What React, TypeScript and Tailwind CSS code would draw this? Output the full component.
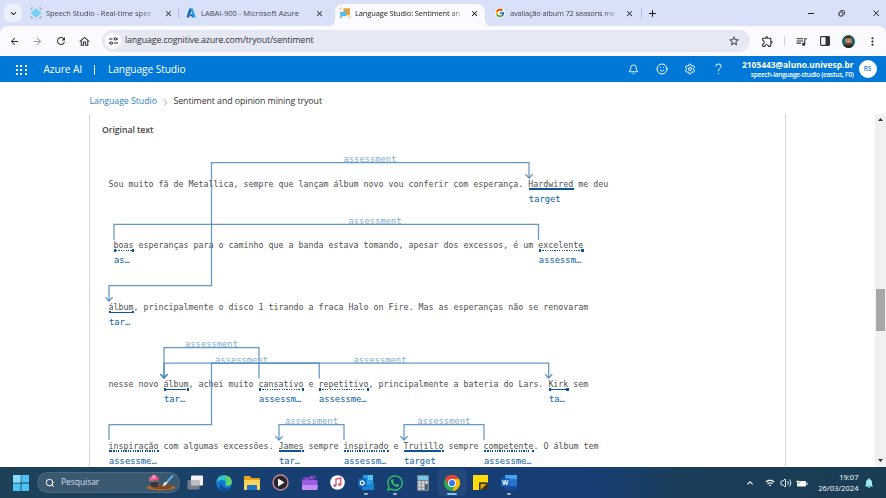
import React from "react";
import {
  MdArrowBack,
  MdArrowForward,
  MdRefresh,
  MdOutlineHome,
  MdStarBorder,
  MdOutlineExtension,
  MdQueueMusic,
  MdMoreVert,
  MdClose,
  MdAdd,
  MdKeyboardArrowDown,
  MdKeyboardArrowUp,
  MdNotifications,
  MdWifi,
} from "react-icons/md";
import { FcGoogle } from "react-icons/fc";
import { FaWhatsapp } from "react-icons/fa";
import { Bell, Smile, Settings, Search, Volume2, ChevronRight } from "lucide-react";

type Kind = "target" | "assessment";
type Piece = string | { word: string; kind: Kind; label: string };

const lines: { top: string; pieces: Piece[] }[] = [
  {
    top: "mt-[41px]",
    pieces: [
      "Sou muito fã de Metallica, sempre que lançam álbum novo vou conferir com esperança. ",
      { word: "Hardwired", kind: "target", label: "target" },
      " me deu",
    ],
  },
  {
    top: "mt-[49.4px]",
    pieces: [
      " ",
      { word: "boas", kind: "assessment", label: "as…" },
      " esperanças para o caminho que a banda estava tomando, apesar dos excessos, é um ",
      { word: "excelente", kind: "assessment", label: "assessm…" },
    ],
  },
  {
    top: "mt-[49.9px]",
    pieces: [
      { word: "álbum", kind: "target", label: "tar…" },
      ", principalmente o disco 1 tirando a fraca Halo on Fire. Mas as esperanças não se renovaram",
    ],
  },
  {
    top: "mt-[65.2px]",
    pieces: [
      "nesse novo ",
      { word: "álbum", kind: "target", label: "tar…" },
      ", achei muito ",
      { word: "cansativo", kind: "assessment", label: "assessm…" },
      " e ",
      { word: "repetitivo", kind: "assessment", label: "assessme…" },
      ", principalmente a bateria do Lars. ",
      { word: "Kirk", kind: "target", label: "ta…" },
      " sem",
    ],
  },
  {
    top: "mt-[49.5px]",
    pieces: [
      { word: "inspiração", kind: "assessment", label: "assessme…" },
      " com algumas excessões. ",
      { word: "James", kind: "target", label: "tar…" },
      " sempre ",
      { word: "inspirado", kind: "assessment", label: "assessm…" },
      " e ",
      { word: "Trujillo", kind: "target", label: "target" },
      " sempre ",
      { word: "competente", kind: "assessment", label: "assessme…" },
      ". O álbum tem",
    ],
  },
];

function Entity({ word, kind, label }: { word: string; kind: Kind; label: string }) {
  return (
    <span className="relative inline-block">
      {word}
      <span
        className={`absolute left-[2px] right-[2px] top-[10.3px] h-[1.6px] ${
          kind === "target"
            ? "bg-[#0b559f]"
            : "bg-[repeating-linear-gradient(90deg,#0b559f_0px,#0b559f_1.2px,transparent_1.2px,transparent_2.4px)]"
        }`}
      />
      <span className="absolute left-[0.5px] top-[9.8px] h-[2.4px] w-[2.4px] bg-[#0b559f]" />
      <span className="absolute -right-[0.5px] top-[9.8px] h-[2.4px] w-[2.4px] bg-[#0b559f]" />
      <span className="absolute left-[0.5px] top-[15px] text-[8.75px] font-normal tracking-[0.03px] text-[#2068aa] [-webkit-text-stroke:0.08px_#2068aa]">
        {label}
      </span>
    </span>
  );
}

const paths = [
  "M529 178V162.7H211.5V285.5H109V301",
  "M114 240V224.3H538.5V240",
  "M164 378V347.5H259V378.5",
  "M164 378V363H319.3V378.5",
  "M548.7 378V363H211.5V424.7H109V440",
  "M279 440V424.7H344V440",
  "M404 440V424.7H484V440",
];
const arrows = [
  [529, 178],
  [109, 301],
  [164, 378],
  [164, 378],
  [548.7, 378],
  [279, 440],
  [404, 440],
];
const relations = [
  [343.5, 162.4],
  [348.5, 224],
  [185, 347],
  [215, 362.7],
  [353.5, 362.7],
  [285, 424.4],
  [417.3, 424.4],
];

function Connectors() {
  return (
    <svg className="pointer-events-none absolute left-0 top-0" width="886" height="385" viewBox="0 82 886 385">
      <g fill="none" stroke="#3c80ba" strokeOpacity="0.8" strokeWidth="1.25">
        {paths.map((d) => (
          <path key={d} d={d} />
        ))}
        {arrows.map(([x, y], i) => (
          <path key={i} d={`M${x - 3.6} ${y - 3.8}L${x} ${y}L${x + 3.6} ${y - 3.8}`} />
        ))}
      </g>
      <g fill="#84adcf" className="font-['DejaVu_Sans_Mono',monospace] text-[8.8px]">
        {relations.map(([x, y], i) => (
          <text key={i} x={x} y={y}>
            assessment
          </text>
        ))}
      </g>
    </svg>
  );
}

function SpeechIcon() {
  return (
    <svg width="12" height="12" viewBox="0 0 12 12">
      <path d="M6 1L11 6L6 11L1 6Z" fill="#7fd3f5" />
      <path d="M2 4.5V7.5M4 3V9M6 2V10M8 3V9M10 4.5V7.5" stroke="#70cdf2" />
      <path d="M1 3V1H3M9 1H11V3M11 9V11H9M3 11H1V9" fill="none" stroke="#8f93b5" strokeWidth="0.8" />
    </svg>
  );
}

function AzureIcon() {
  return (
    <svg width="10" height="10" viewBox="0 0 10 10">
      <path d="M3.3 0.5H6L3 9.5H0.5Z" fill="#1267b4" />
      <path d="M5 0.5H6.8L9.8 9.5H7L3.4 6.6H6.2L4.6 2Z" fill="#2f9fe8" />
      <path d="M3.2 6.5H6.4L7 9.4Z" fill="#0a539c" />
    </svg>
  );
}

function LanguageIcon() {
  return (
    <svg width="12" height="12" viewBox="0 0 12 12">
      <path d="M1 3V1H3M1 9V11H3M11 9V11H9" fill="none" stroke="#d9b45e" strokeWidth="0.7" />
      <rect x="4.5" y="1.2" width="6.5" height="7" fill="#f5a335" />
      <path d="M6 3.2H9.5M6 4.8H8.5" stroke="#4dbceb" strokeWidth="0.8" />
      <path d="M1 5H7V9.3H3.5L1.5 10.8Z" fill="#4dbceb" />
    </svg>
  );
}

function TabTitle({ children, className }: { children: string; className: string }) {
  return (
    <span
      className={`shrink-0 whitespace-nowrap text-[7.5px] leading-3 ${className}`}
    >
      {children}
    </span>
  );
}

function TabStrip() {
  return (
    <div className="flex h-[26px] items-center bg-[#d9e1f9] text-[#45484f]">
      <div className="ml-1 flex h-[18px] w-[18px] shrink-0 items-center justify-center rounded-md bg-[#edf1fc]">
        <MdKeyboardArrowDown size={11} className="text-black" />
      </div>
      <div className="ml-2 flex w-[148px] shrink-0 items-center">
        <SpeechIcon />
        <TabTitle className="ml-1 w-[110px] tracking-[-0.07px] [mask-image:linear-gradient(to_right,black_85%,transparent)]">
          Speech Studio - Real-time spee
        </TabTitle>
        <MdClose size={9} className="ml-[8px] text-[#222]" />
      </div>
      <div className="flex h-[26px] w-[157px] shrink-0 items-center">
        <div className="h-[10px] w-px bg-[#a9c3f5]" />
        <span className="ml-[7px]">
          <AzureIcon />
        </span>
        <TabTitle className="ml-[5px] w-[110px] tracking-[0.03px]">LABAI-900 - Microsoft Azure</TabTitle>
        <MdClose size={9} className="ml-[4px] text-[#222]" />
      </div>
      <div className="relative mt-1 flex h-[22px] w-[150px] shrink-0 items-center rounded-t-lg bg-[#fbfbff] pb-[4px] pl-1 text-[#222]">
        <span className="absolute -left-[6px] bottom-0 h-[6px] w-[6px] bg-[radial-gradient(circle_at_0_0,transparent_6px,#fbfbff_6px)]" />
        <span className="absolute -right-[6px] bottom-0 h-[6px] w-[6px] bg-[radial-gradient(circle_at_100%_0,transparent_6px,#fbfbff_6px)]" />
        <LanguageIcon />
        <TabTitle className="ml-[4px] w-[111px] tracking-[-0.13px] [mask-image:linear-gradient(to_right,black_85%,transparent)]">
          Language Studio: Sentiment an
        </TabTitle>
        <MdClose size={9} className="ml-[4px] text-black" />
      </div>
      <div className="flex h-[26px] w-[157px] shrink-0 items-center pl-[10px]">
        <span className="flex h-[10px] w-[10px] items-center justify-center rounded-full bg-white">
          <FcGoogle size={10} />
        </span>
        <TabTitle className="ml-[5px] w-[110px] tracking-[-0.18px] [mask-image:linear-gradient(to_right,black_85%,transparent)]">
          avaliação album 72 seasons me
        </TabTitle>
        <MdClose size={9} className="ml-[5px] text-[#222]" />
      </div>
      <div className="-ml-px h-[10px] w-px shrink-0 bg-[#a9c3f5]" />
      <MdAdd size={11} className="ml-[5px] shrink-0 text-black" />
      <svg className="ml-[149px] shrink-0" width="72" height="12" viewBox="0 0 72 12" fill="none" stroke="#222">
        <path d="M1 6.5H7M66.5 3.5L72 9M72 3.5L66.5 9" />
        <rect x="32" y="5" width="4" height="4" rx="1" />
        <path d="M33.5 3.5H36.5Q37.5 3.5 37.5 4.5V7.5" strokeWidth="0.8" />
      </svg>
    </div>
  );
}

function Toolbar() {
  return (
    <div className="bg-[#d9e1f9]">
      <div className="flex h-[30px] items-center rounded-t-lg bg-[#fbfbff] text-[#303238]">
        <MdArrowBack size={11} className="ml-[9px] shrink-0" />
        <MdArrowForward size={11} className="ml-[12px] shrink-0 text-[#9a9ba2]" />
        <MdRefresh size={12} className="ml-[12px] shrink-0" />
        <MdOutlineHome size={13} className="ml-[11px] shrink-0" />
        <div className="ml-[11px] flex h-[22px] w-[648px] shrink-0 items-center rounded-full bg-[#e6e8f3] pl-[3px]">
          <div className="flex h-4 w-4 items-center justify-center rounded-full bg-white">
            <svg width="9" height="8" viewBox="0 0 9 8" fill="none" stroke="#222">
              <path d="M0 2H3.4M5 6H9" />
              <rect x="5" y="0.8" width="2.6" height="2.2" rx="1" />
              <rect x="1" y="5" width="2.6" height="2.2" rx="1" />
              <path d="M7.5 2H9M0 6H1" />
            </svg>
          </div>
          <span className="ml-[4px] w-[600px] text-[8.8px] tracking-[-0.13px]">language.cognitive.azure.com/tryout/sentiment</span>
          <MdStarBorder size={12} className="ml-[3px] shrink-0" />
        </div>
        <MdOutlineExtension size={13} className="ml-[11px] shrink-0" />
        <div className="ml-[10px] h-[10px] w-px shrink-0 bg-[#c5d4f5]" />
        <MdQueueMusic size={13} className="ml-[10px] shrink-0" />
        <svg className="ml-[12px] shrink-0" width="10" height="10" viewBox="0 0 10 10">
          <rect x="0.6" y="0.6" width="8.8" height="8.8" rx="0.8" fill="none" stroke="#303238" strokeWidth="1.1" />
          <rect x="5.5" y="0.6" width="4" height="8.8" fill="#303238" />
        </svg>
        <svg className="ml-[12px] shrink-0" width="13" height="13" viewBox="0 0 13 13">
          <circle cx="6.5" cy="6.5" r="6.5" fill="#1c6064" />
          <path d="M1.5 10.5Q6.5 7.5 11.5 10.5Q9 13 6.5 13Q4 13 1.5 10.5Z" fill="#22241f" />
          <ellipse cx="6.5" cy="5.8" rx="3.2" ry="4.2" fill="#d6976f" />
          <path d="M3.3 4.3Q3.5 1.2 6.5 1.2Q9.5 1.2 9.7 4.3L9 3.2H4Z" fill="#2a1b16" />
          <path d="M3.6 7L5 7.7H8L9.4 7Q9 10.7 6.5 10.7Q4 10.7 3.6 7Z" fill="#6b3d26" />
          <path d="M4.4 5H5.8M7.2 5H8.6" stroke="#4c2d20" strokeWidth="0.7" />
        </svg>
        <MdMoreVert size={13} className="ml-[11px] shrink-0" />
      </div>
    </div>
  );
}

function AppHeader() {
  return (
    <div className="flex h-[26px] items-center bg-[#0078d7] text-white">
      <div className="ml-4 mt-px grid w-[11px] shrink-0 grid-cols-3 gap-[2px]">
        {Array.from({ length: 9 }, (_, i) => (
          <span key={i} className="h-[2px] w-[2px] bg-white" />
        ))}
      </div>
      <span className="ml-[16.5px] mt-px w-[50.5px] shrink-0 whitespace-nowrap text-[10.2px] tracking-[-0.1px]">Azure AI</span>
      <span className="mt-px h-[10px] w-px shrink-0 bg-white" />
      <span className="ml-[13px] mt-px w-[500px] shrink-0 whitespace-nowrap text-[10.2px] tracking-[-0.1px]">Language Studio</span>
      <Bell size={11} strokeWidth={2} className="ml-[19.5px] shrink-0" />
      <Smile size={12} strokeWidth={2} className="ml-[17px] shrink-0" />
      <Settings size={12} strokeWidth={2} className="ml-[16.5px] shrink-0" />
      <svg className="ml-[18px] shrink-0" width="9" height="12" viewBox="0 0 9 12" fill="none" stroke="white">
        <path d="M1.8 3.3Q1.8 1 4.5 1Q7.2 1 7.2 3.2Q7.2 4.5 5.8 5.5Q4.5 6.5 4.5 8.2" />
        <circle cx="4.5" cy="10.6" r="0.4" fill="white" strokeWidth="0.5" />
      </svg>
      <div className="ml-[8.5px] mt-px flex w-[122px] shrink-0 flex-col items-end whitespace-nowrap">
        <span className="text-[8.4px] font-bold leading-[11px]">2105443@aluno.univesp.br</span>
        <span className="text-[6.5px] font-semibold leading-[10px] tracking-[-0.25px]">speech-language-studio (eastus, F0)</span>
      </div>
      <div className="ml-[5px] flex h-[18px] w-[18px] shrink-0 items-center justify-center rounded-full bg-white text-[6.5px] font-semibold text-[#2480c9]">
        RS
      </div>
    </div>
  );
}

function Content() {
  return (
    <div className="relative flex h-[385px] flex-col overflow-hidden bg-white">
      <div className="flex h-[32px] shrink-0 items-center pl-[89.5px] pt-[8px] text-[8.8px]">
        <span className="w-[68px] whitespace-nowrap tracking-[-0.05px] text-[#2c83cc]">Language Studio</span>
        <ChevronRight size={11} strokeWidth={1.5} className="ml-[2px] text-[#888]" />
        <span className="ml-[3px] whitespace-nowrap tracking-[-0.08px] text-[#333]">Sentiment and opinion mining tryout</span>
      </div>
      <div className="flex min-h-0 flex-1">
        <div className="ml-[89px] w-[697px] shrink-0 overflow-hidden border-x border-[#d6d6d6]">
          <h2 className="ml-3 mt-[9px] text-[8.7px] font-semibold leading-[14px] tracking-[-0.06px] text-[#444]">Original text</h2>
          <div className="ml-[18.5px] font-['DejaVu_Sans_Mono',monospace] text-[8.3px] leading-3 tracking-[0.003px] text-[#4f4f4f]">
            {lines.map((line, i) => (
              <div key={i} className={`h-3 whitespace-pre ${line.top}`}>
                {line.pieces.map((p, j) =>
                  typeof p === "string" ? <span key={j}>{p}</span> : <Entity key={j} {...p} />
                )}
              </div>
            ))}
          </div>
        </div>
        <div className="ml-auto flex w-[11px] flex-col items-center bg-[#f1f1f1]">
          <svg className="mt-1 shrink-0" width="5" height="3" viewBox="0 0 5 3">
            <path d="M2.5 0L5 3H0Z" fill="#333" />
          </svg>
          <div className="mt-[168px] h-[42px] w-[9px] shrink-0 bg-[#a8a8a8]" />
          <svg className="mb-[5px] mt-auto shrink-0" width="5" height="3" viewBox="0 0 5 3">
            <path d="M0 0H5L2.5 3Z" fill="#333" />
          </svg>
        </div>
      </div>
      <Connectors />
    </div>
  );
}

function Slot({ children, mark }: { children: React.ReactNode; mark?: "open" | "active" }) {
  return (
    <div
      className={`relative flex h-[27px] w-[28.5px] shrink-0 items-center justify-center ${
        mark === "active" ? "rounded bg-white/5" : ""
      }`}
    >
      {children}
      {mark && (
        <span
          className={`absolute bottom-[1px] h-[2px] rounded-full ${mark === "active" ? "w-[10px] bg-[#7cc8ee]" : "w-1 bg-[#9eb3c6]"}`}
        />
      )}
    </div>
  );
}

function Taskbar() {
  return (
    <div className="flex h-[31px] items-center bg-[linear-gradient(90deg,#1c4158_0%,#1c4260_15%,#173f72_30%,#173e75_66%,#1a3e59_77%,#193d54_100%)] text-white">
      <svg className="ml-[13px] shrink-0" width="16" height="16" viewBox="0 0 16 16">
        <path d="M0 0H7.6V7.6H0ZM8.4 0H16V7.6H8.4ZM0 8.4H7.6V16H0ZM8.4 8.4H16V16H8.4Z" fill="#4cc2f5" />
        <path d="M0 0H7.6V7.6H0Z" fill="#8bdcfa" />
      </svg>
      <div className="ml-2 flex h-[21px] w-[143px] shrink-0 items-center rounded-full border border-white/10 bg-[#3a5870] pl-[7px]">
        <Search size={10} strokeWidth={2.4} />
        <span className="ml-[6px] w-[85px] text-[8.6px] tracking-[-0.1px] text-[#d3dce3]">Pesquisar</span>
        <svg className="shrink-0" width="30" height="17" viewBox="0 0 30 17">
          <ellipse cx="15" cy="13.5" rx="14.5" ry="3" fill="#a3682f" />
          <path d="M9 12Q17 9 27 12L22 15H9Z" fill="#7d4721" />
          <circle cx="6" cy="5.2" r="2.8" fill="#ef5f96" />
          <circle cx="10" cy="5" r="2.8" fill="#e94885" />
          <circle cx="8" cy="3" r="2.3" fill="#ff88b2" />
          <path d="M3 8Q8 5.5 13 8" stroke="#38843f" strokeWidth="1.2" fill="none" />
          <path d="M5 8H11.5L12 12Q8.5 15 4.5 12Z" fill="#3c3346" />
          <path d="M27 1.5L21.5 7.5" stroke="#58aee8" strokeWidth="2" />
          <path d="M22.5 7L20 11L16.5 12.5L18 8.5Z" fill="#dce8ef" />
        </svg>
      </div>
      <div className="flex pl-[1px]">
        <Slot>
          <svg width="16" height="15" viewBox="0 0 16 15">
            <rect x="4" y="0.5" width="12" height="10" rx="1" fill="#f3f3f3" />
            <rect x="0.5" y="5" width="12" height="9.5" rx="1" fill="#7f858e" fillOpacity="0.9" />
            <rect x="4" y="5" width="8.5" height="5.5" fill="#bbbfc5" />
          </svg>
        </Slot>
        <Slot>
          <svg width="16" height="16" viewBox="0 0 16 16">
            <circle cx="8" cy="8" r="7.8" fill="#1278cf" />
            <path d="M0.3 7.5Q1 0.3 8 0.2Q15.8 0.8 15.8 7.2Q15.2 10.7 11.5 10.7Q8.5 10.7 9.8 8.4Q10 5 6 5Q2 5 0.3 7.5Z" fill="#35c3c8" />
            <path d="M8 0.2Q15.8 0.8 15.8 7.2Q15.2 10.7 11.5 10.7Q9 10.7 9.8 8.4Q13.5 6 8 0.2Z" fill="#66d35b" />
            <path d="M5.6 8.5Q5.5 14 12.8 13.2Q9 17 4.8 14.9Q2.4 11 5.6 8.5Z" fill="#0c4b9c" />
          </svg>
        </Slot>
        <Slot>
          <svg width="16" height="14" viewBox="0 0 16 14">
            <path d="M0 1Q0 0 1 0H6L7.5 2H15Q16 2 16 3V13Q16 14 15 14H1Q0 14 0 13Z" fill="#e6a420" />
            <path d="M0 4H16V13Q16 14 15 14H1Q0 14 0 13Z" fill="#ffd45c" />
            <path d="M3 14V10Q3 9 4 9H12Q13 9 13 10V14Z" fill="#1875ca" />
          </svg>
        </Slot>
        <Slot>
          <svg width="17" height="17" viewBox="0 0 17 17">
            <circle cx="8.5" cy="8.5" r="7.5" fill="#27252d" stroke="#c48b96" strokeWidth="1.4" />
            <path d="M6 4.5L12.5 8.5L6 12.5Z" fill="white" />
          </svg>
        </Slot>
        <Slot>
          <svg width="17" height="15" viewBox="0 0 17 15">
            <path d="M0.5 3.5L14.5 0L15.5 3.5L1 6.5Z" fill="#6e3bb5" />
            <path d="M4 2.6L7 5.2M9 1.4L12 4.2" stroke="#8d56cf" strokeWidth="1.7" />
            <rect x="1" y="5" width="15.5" height="10" rx="1.2" fill="#9b5be2" />
            <path d="M1 10H16.5V14Q16.5 15 15.5 15H2Q1 15 1 14Z" fill="#c58cf5" />
          </svg>
        </Slot>
        <Slot>
          <svg width="15" height="15" viewBox="0 0 15 15">
            <circle cx="7.5" cy="7.5" r="7.3" fill="white" />
            <path d="M6 10.5V4L10.8 3V9.5" fill="none" stroke="#ec4a68" strokeWidth="1.3" />
            <ellipse cx="4.9" cy="10.6" rx="1.6" ry="1.3" fill="#a958c8" />
            <ellipse cx="9.7" cy="9.6" rx="1.6" ry="1.3" fill="#ec4a68" />
          </svg>
        </Slot>
        <Slot mark="open">
          <svg width="16" height="15" viewBox="0 0 16 15">
            <rect x="5" y="0" width="10" height="10" fill="#2d9be3" />
            <path d="M10 0H15V5H10Z" fill="#55c4f5" />
            <path d="M4 7L10 10.5L16 7V14Q16 15 15 15H5Q4 15 4 14Z" fill="#1a85d6" />
            <rect x="0" y="3.5" width="8.5" height="8.5" rx="0.8" fill="#0b65b9" />
            <circle cx="4.2" cy="7.8" r="2" fill="none" stroke="white" strokeWidth="1.2" />
          </svg>
        </Slot>
        <Slot mark="open">
          <FaWhatsapp size={18} className="text-[#35c866]" />
        </Slot>
        <Slot>
          <svg width="12" height="16" viewBox="0 0 12 16">
            <rect width="12" height="16" rx="1" fill="#7d8790" />
            <rect x="1.3" y="1.3" width="9.4" height="3.6" fill="#70d0f0" />
            <path d="M1.3 6.2H3.8V8.4H1.3ZM4.8 6.2H7.3V8.4H4.8ZM8.2 6.2H10.7V8.4H8.2ZM1.3 9.3H3.8V11.5H1.3ZM4.8 9.3H7.3V11.5H4.8ZM1.3 12.4H3.8V14.6H1.3ZM4.8 12.4H7.3V14.6H4.8Z" fill="#e1e5e8" />
            <rect x="8.2" y="9.3" width="2.5" height="5.3" fill="#4b565f" />
          </svg>
        </Slot>
        <Slot mark="active">
          <svg width="16" height="16" viewBox="0 0 16 16">
            <circle cx="8" cy="8" r="8" fill="#30a952" />
            <path d="M1.07 4A8 8 0 0 1 14.93 4H8L4.5 10Z" fill="#e94335" />
            <path d="M14.93 4A8 8 0 0 1 8 16L11.5 10L8 4Z" fill="#fbbc05" />
            <circle cx="8" cy="8" r="4" fill="white" />
            <circle cx="8" cy="8" r="3.1" fill="#347de9" />
          </svg>
        </Slot>
        <Slot>
          <svg width="15" height="15" viewBox="0 0 15 15">
            <path d="M0 0H15V7.5L7.5 15H0Z" fill="#ffdb0a" />
            <path d="M7.5 15V7.5H15V15Z" fill="#343430" />
            <path d="M7.5 15V7.5H15Z" fill="#e2ad00" />
            <path d="M6 7.5H14V9H7.5V15H6Z" fill="#343430" />
          </svg>
        </Slot>
        <Slot mark="open">
          <svg width="16" height="15" viewBox="0 0 16 15">
            <rect x="4" y="0" width="12" height="15" rx="1" fill="#2477ca" />
            <path d="M4 0H15Q16 0 16 1V4H4Z" fill="#46a4ee" />
            <path d="M4 11H16V14Q16 15 15 15H5Q4 15 4 14Z" fill="#164c9d" />
            <rect x="0" y="3.2" width="8.5" height="8.5" rx="0.8" fill="#185abd" />
            <text x="1" y="10" fontSize="6.5" fontWeight="700" fill="white">
              W
            </text>
          </svg>
        </Slot>
      </div>
      <MdKeyboardArrowUp size={12} className="ml-[220.5px] shrink-0" />
      <MdWifi size={10} className="ml-[9.5px] shrink-0" />
      <Volume2 size={12} strokeWidth={1.8} className="ml-[5px] shrink-0" />
      <svg className="ml-[4px] shrink-0" width="12" height="10" viewBox="0 0 12 10">
        <rect x="1" y="3" width="9" height="5.5" rx="1" fill="white" />
        <path d="M10.5 4.5H11.5V7H10.5Z" fill="white" />
        <path d="M1 0.5V3M3.4 0.5V3M0.3 2.5H4.1V4Q4.1 5 2.2 5Q0.3 5 0.3 4Z" fill="white" stroke="#1a3e59" strokeWidth="0.5" />
      </svg>
      <div className="ml-[5.5px] flex w-[45px] shrink-0 flex-col items-end whitespace-nowrap text-[7.6px] leading-[10.5px]">
        <span>19:07</span>
        <span>26/03/2024</span>
      </div>
      <MdNotifications size={12} className="ml-[4px] shrink-0 text-[#9be9f3]" />
    </div>
  );
}

export default function App() {
  return (
    <div className="h-[498px] w-[886px] overflow-hidden font-['Open_Sans','Noto_Sans',sans-serif]">
      <TabStrip />
      <Toolbar />
      <AppHeader />
      <Content />
      <Taskbar />
    </div>
  );
}
